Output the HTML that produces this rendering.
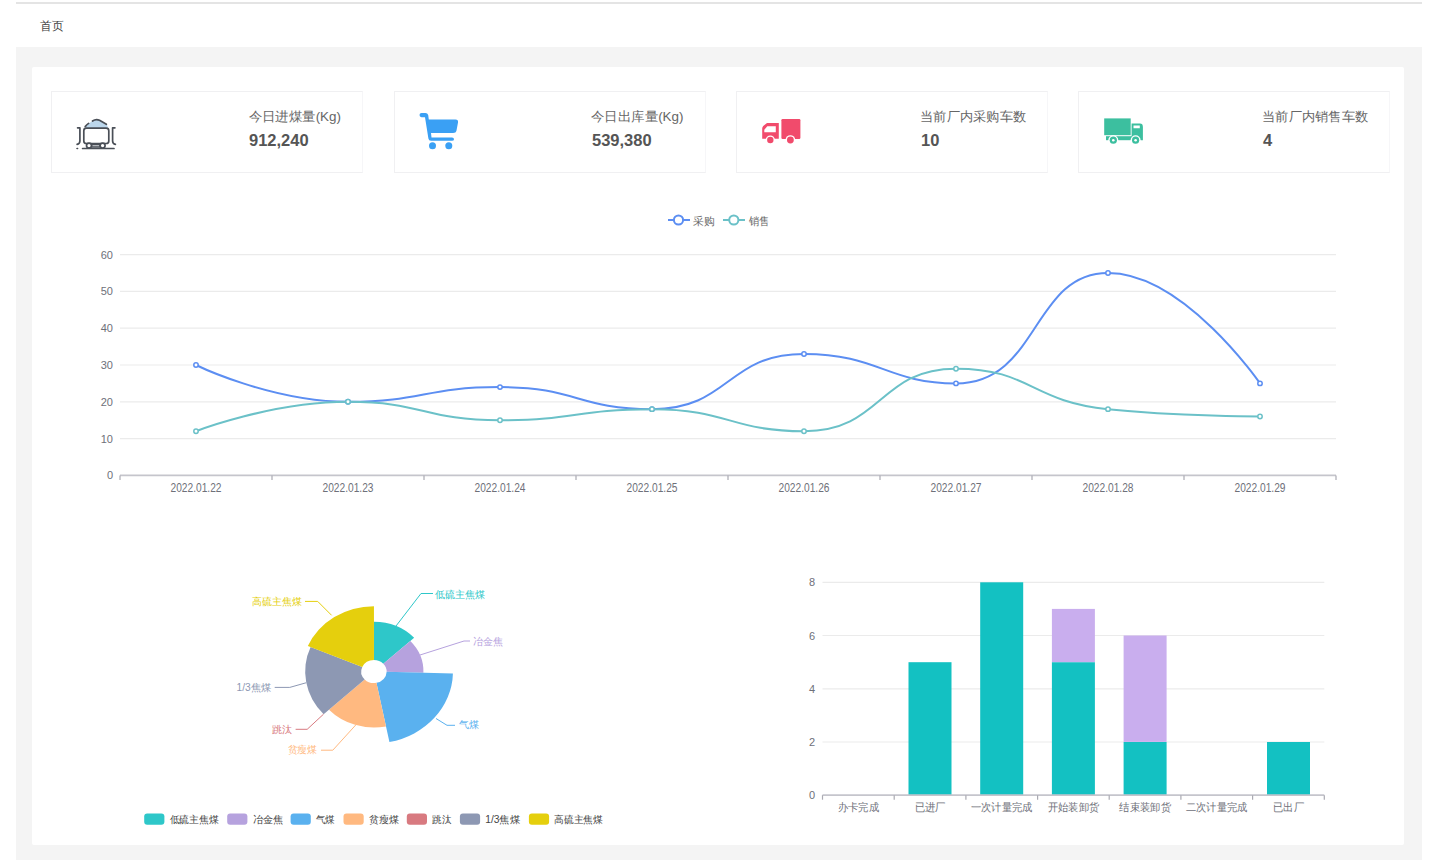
<!DOCTYPE html>
<html><head><meta charset="utf-8">
<style>
*{margin:0;padding:0;box-sizing:border-box}
html,body{width:1440px;height:860px;overflow:hidden;background:#fff;font-family:"Liberation Sans",sans-serif}
.topline{position:absolute;left:16px;top:2px;width:1406px;height:2px;background:#e4e4e4}
.crumb{position:absolute;left:40px;top:18px;font-size:12px;color:#444;line-height:15px}
.bg{position:absolute;left:16px;top:47px;width:1406px;height:813px;background:#f4f4f4}
.card{position:absolute;left:32px;top:66.5px;width:1371.5px;height:778.3px;background:#fff;border-radius:2px}
.stat{position:absolute;top:91px;width:312px;height:81.5px;border:1px solid #f0f0f2;border-right-color:#f6f6f8;background:#fff}
.stat .lbl{position:absolute;top:17px;font-size:13px;color:#666;line-height:16px;white-space:nowrap}
.stat .num{position:absolute;top:39.3px;font-size:16.5px;font-weight:bold;color:#555;line-height:18px}
svg.ch{position:absolute;left:0;top:0}
.ax{font-size:11px;fill:#6E7079}
.crumbt{font-size:12px;fill:#444}
.lblt{font-size:13px;fill:#666}
.lg{font-size:11px;fill:#666}
.pl{font-size:10px}
</style></head><body>
<div class="topline"></div>
<div class="bg"></div>
<div class="card"></div>
<div class="stat" style="left:51px"><div class="num" style="left:197px">912,240</div></div>
<div class="stat" style="left:394px"><div class="num" style="left:197px">539,380</div></div>
<div class="stat" style="left:736px"><div class="num" style="left:184px">10</div></div>
<div class="stat" style="left:1078px"><div class="num" style="left:184px">4</div></div>
<svg class="ch" width="1440" height="860" viewBox="0 0 1440 860">

<g fill="none" stroke="#4a4f57" stroke-width="1.7" stroke-linecap="round" stroke-linejoin="round">
 <path d="M84.5,128.2 Q88,123 92.5,121 Q96,118.6 99.5,120.2 L106.8,124.4 L108.3,128.2Z" fill="#bcd7ec" stroke="none"/>
 <path d="M85.2,126.6 Q86.8,124.6 88.6,123.4"/>
 <path d="M92.5,121 Q96,118.7 99.5,120.3 L106.4,124.3"/>
 <rect x="83.8" y="128.1" width="25" height="15.4" rx="2.6"/>
 <path d="M77.6,127.8 L79.9,127.8 L79.9,141 Q79.9,143.8 77.1,144.3"/>
 <path d="M114.9,127.8 L112.6,127.8 L112.6,141 Q112.6,143.8 115.4,144.3"/>
 <rect x="91.6" y="144.7" width="8.4" height="2.3" fill="#d6d8dc" stroke-width="1.3"/>
 <circle cx="89" cy="145.6" r="2.5" fill="#fff"/>
 <circle cx="102.6" cy="145.6" r="2.5" fill="#fff"/>
 <line x1="82.6" y1="148.5" x2="114" y2="148.5"/>
 <circle cx="77.2" cy="148.5" r="0.5" fill="#4a4f57" stroke-width="1"/>
</g>
<g fill="#3aa0f4">
 <path d="M421.5,113 L425.5,113 Q427.5,113 428.2,115 L428.8,119.6 L455.5,119.6 Q458.5,119.6 458,122.5 L456.5,130.5 Q456,133 453,133 L431,133 L431.5,137.5 L452,137.5 Q454,137.5 454,139.2 Q454,140.8 452,140.8 L431,140.8 Q428.7,140.8 428.4,138.5 L425,117.2 L421.5,117.2 Q419.5,117.2 419.5,115.1 Q419.5,113 421.5,113Z"/>
 <circle cx="432.5" cy="145.7" r="3.5"/>
 <circle cx="448.8" cy="145.7" r="3.5"/>
</g>
<g fill="#f14b6c">
 <rect x="781.4" y="119" width="19" height="20" rx="1.2"/>
 <path d="M767,123 L778.8,123 L778.8,138.7 L762.2,138.7 L762.2,128.5 Q762.2,127 763.2,126 Z M767.3,126.3 L764.3,129.8 L764.3,132.3 L775.8,132.3 L775.8,126.3Z" fill-rule="evenodd"/>
 <circle cx="770.3" cy="140" r="4.6" fill="#fff"/>
 <circle cx="790.4" cy="140" r="4.8" fill="#fff"/>
 <circle cx="770.3" cy="140" r="3.2"/>
 <circle cx="790.4" cy="140" r="3.4"/>
</g>
<g fill="#3cbf9f">
 <rect x="1104.2" y="118.4" width="26.5" height="16.8"/>
 <path d="M1131.6,123.6 L1140,123.6 Q1142.9,123.6 1142.9,127 L1142.9,140.2 L1131.6,140.2Z M1133.5,125.6 L1139.8,125.6 L1139.8,128.3 L1133.5,128.3Z" fill-rule="evenodd"/>
 <rect x="1106" y="136.2" width="26" height="4"/>
 <circle cx="1113.3" cy="140.2" r="5" fill="#fff"/>
 <circle cx="1135.6" cy="140.2" r="5" fill="#fff"/>
 <circle cx="1113.3" cy="140.2" r="3.6"/>
 <circle cx="1135.6" cy="140.2" r="3.6"/>
 <circle cx="1113.3" cy="140.2" r="1.3" fill="#fff"/>
 <circle cx="1135.6" cy="140.2" r="1.3" fill="#fff"/>
</g>


<text x="40" y="30" class="crumbt" textLength="23.5" lengthAdjust="spacingAndGlyphs">首页</text>
<text x="248.5" y="121.4" class="lblt" textLength="92.5" lengthAdjust="spacingAndGlyphs">今日进煤量(Kg)</text>
<text x="591" y="121.4" class="lblt" textLength="92.5" lengthAdjust="spacingAndGlyphs">今日出库量(Kg)</text>
<text x="920.2" y="121.4" class="lblt" textLength="106" lengthAdjust="spacingAndGlyphs">当前厂内采购车数</text>
<text x="1262.2" y="121.4" class="lblt" textLength="106" lengthAdjust="spacingAndGlyphs">当前厂内销售车数</text>
<line x1="120" y1="438.6" x2="1336" y2="438.6" stroke="#ebebeb" stroke-width="1.2"/>
<line x1="120" y1="401.8" x2="1336" y2="401.8" stroke="#ebebeb" stroke-width="1.2"/>
<line x1="120" y1="365.0" x2="1336" y2="365.0" stroke="#ebebeb" stroke-width="1.2"/>
<line x1="120" y1="328.2" x2="1336" y2="328.2" stroke="#ebebeb" stroke-width="1.2"/>
<line x1="120" y1="291.4" x2="1336" y2="291.4" stroke="#ebebeb" stroke-width="1.2"/>
<line x1="120" y1="254.6" x2="1336" y2="254.6" stroke="#ebebeb" stroke-width="1.2"/>
<text x="113" y="479.4" text-anchor="end" class="ax">0</text>
<text x="113" y="442.6" text-anchor="end" class="ax">10</text>
<text x="113" y="405.8" text-anchor="end" class="ax">20</text>
<text x="113" y="369.0" text-anchor="end" class="ax">30</text>
<text x="113" y="332.2" text-anchor="end" class="ax">40</text>
<text x="113" y="295.4" text-anchor="end" class="ax">50</text>
<text x="113" y="258.6" text-anchor="end" class="ax">60</text>
<line x1="120" y1="475.4" x2="1336" y2="475.4" stroke="#c5c5cc" stroke-width="1.8"/>
<line x1="120" y1="475.4" x2="120" y2="479.9" stroke="#aaaab2" stroke-width="1.2"/>
<line x1="272" y1="475.4" x2="272" y2="479.9" stroke="#aaaab2" stroke-width="1.2"/>
<line x1="424" y1="475.4" x2="424" y2="479.9" stroke="#aaaab2" stroke-width="1.2"/>
<line x1="576" y1="475.4" x2="576" y2="479.9" stroke="#aaaab2" stroke-width="1.2"/>
<line x1="728" y1="475.4" x2="728" y2="479.9" stroke="#aaaab2" stroke-width="1.2"/>
<line x1="880" y1="475.4" x2="880" y2="479.9" stroke="#aaaab2" stroke-width="1.2"/>
<line x1="1032" y1="475.4" x2="1032" y2="479.9" stroke="#aaaab2" stroke-width="1.2"/>
<line x1="1184" y1="475.4" x2="1184" y2="479.9" stroke="#aaaab2" stroke-width="1.2"/>
<line x1="1336" y1="475.4" x2="1336" y2="479.9" stroke="#aaaab2" stroke-width="1.2"/>
<text x="196" y="492.2" text-anchor="middle" class="ax" style="font-size:12px" textLength="51" lengthAdjust="spacingAndGlyphs">2022.01.22</text>
<text x="348" y="492.2" text-anchor="middle" class="ax" style="font-size:12px" textLength="51" lengthAdjust="spacingAndGlyphs">2022.01.23</text>
<text x="500" y="492.2" text-anchor="middle" class="ax" style="font-size:12px" textLength="51" lengthAdjust="spacingAndGlyphs">2022.01.24</text>
<text x="652" y="492.2" text-anchor="middle" class="ax" style="font-size:12px" textLength="51" lengthAdjust="spacingAndGlyphs">2022.01.25</text>
<text x="804" y="492.2" text-anchor="middle" class="ax" style="font-size:12px" textLength="51" lengthAdjust="spacingAndGlyphs">2022.01.26</text>
<text x="956" y="492.2" text-anchor="middle" class="ax" style="font-size:12px" textLength="51" lengthAdjust="spacingAndGlyphs">2022.01.27</text>
<text x="1108" y="492.2" text-anchor="middle" class="ax" style="font-size:12px" textLength="51" lengthAdjust="spacingAndGlyphs">2022.01.28</text>
<text x="1260" y="492.2" text-anchor="middle" class="ax" style="font-size:12px" textLength="51" lengthAdjust="spacingAndGlyphs">2022.01.29</text>
<path d="M196.00,365.00 C196.00,365.00 271.10,401.80 348.00,401.80 C423.10,401.80 424.22,387.08 500.00,387.08 C576.22,387.08 577.96,409.16 652.00,409.16 C729.96,409.16 726.35,353.96 804.00,353.96 C878.35,353.96 887.33,383.40 956.00,383.40 C1039.33,383.40 1032.00,273.00 1108.00,273.00 C1184.00,273.00 1260.00,383.40 1260.00,383.40" fill="none" stroke="#5C8EF2" stroke-width="2"/>
<path d="M196.00,431.24 C196.00,431.24 271.58,401.80 348.00,401.80 C423.58,401.80 423.82,420.20 500.00,420.20 C575.82,420.20 576.30,409.16 652.00,409.16 C728.30,409.16 730.58,431.24 804.00,431.24 C882.58,431.24 878.33,368.68 956.00,368.68 C1030.33,368.68 1030.74,401.55 1108.00,409.16 C1182.74,416.52 1260.00,416.52 1260.00,416.52" fill="none" stroke="#6BC1C8" stroke-width="2"/>
<circle cx="196.0" cy="365.00" r="2.2" fill="#fff" stroke="#5C8EF2" stroke-width="1.5"/>
<circle cx="348.0" cy="401.80" r="2.2" fill="#fff" stroke="#5C8EF2" stroke-width="1.5"/>
<circle cx="500.0" cy="387.08" r="2.2" fill="#fff" stroke="#5C8EF2" stroke-width="1.5"/>
<circle cx="652.0" cy="409.16" r="2.2" fill="#fff" stroke="#5C8EF2" stroke-width="1.5"/>
<circle cx="804.0" cy="353.96" r="2.2" fill="#fff" stroke="#5C8EF2" stroke-width="1.5"/>
<circle cx="956.0" cy="383.40" r="2.2" fill="#fff" stroke="#5C8EF2" stroke-width="1.5"/>
<circle cx="1108.0" cy="273.00" r="2.2" fill="#fff" stroke="#5C8EF2" stroke-width="1.5"/>
<circle cx="1260.0" cy="383.40" r="2.2" fill="#fff" stroke="#5C8EF2" stroke-width="1.5"/>
<circle cx="196.0" cy="431.24" r="2.2" fill="#fff" stroke="#6BC1C8" stroke-width="1.5"/>
<circle cx="348.0" cy="401.80" r="2.2" fill="#fff" stroke="#6BC1C8" stroke-width="1.5"/>
<circle cx="500.0" cy="420.20" r="2.2" fill="#fff" stroke="#6BC1C8" stroke-width="1.5"/>
<circle cx="652.0" cy="409.16" r="2.2" fill="#fff" stroke="#6BC1C8" stroke-width="1.5"/>
<circle cx="804.0" cy="431.24" r="2.2" fill="#fff" stroke="#6BC1C8" stroke-width="1.5"/>
<circle cx="956.0" cy="368.68" r="2.2" fill="#fff" stroke="#6BC1C8" stroke-width="1.5"/>
<circle cx="1108.0" cy="409.16" r="2.2" fill="#fff" stroke="#6BC1C8" stroke-width="1.5"/>
<circle cx="1260.0" cy="416.52" r="2.2" fill="#fff" stroke="#6BC1C8" stroke-width="1.5"/>
<line x1="668" y1="220" x2="690" y2="220" stroke="#5C8EF2" stroke-width="2"/><circle cx="678.5" cy="220" r="4.6" fill="#fff" stroke="#5C8EF2" stroke-width="2"/>
<text x="693" y="224.5" class="lg" textLength="21.5" lengthAdjust="spacingAndGlyphs">采购</text>
<line x1="723" y1="220" x2="745" y2="220" stroke="#6BC1C8" stroke-width="2"/><circle cx="733.8" cy="220" r="4.6" fill="#fff" stroke="#6BC1C8" stroke-width="2"/>
<text x="748.5" y="224.5" class="lg" textLength="20.5" lengthAdjust="spacingAndGlyphs">销售</text>
<path fill="#2ec7c9" d="M373.95,621.72 A54.7,49.78 0 0 1 414.15,637.74 L383.28,663.66 A12.7,11.56 0 0 0 373.95,659.94Z"/>
<path fill="#b6a2de" d="M410.33,640.95 A49.5,45.05 0 0 1 423.43,672.68 L386.65,671.80 A12.7,11.56 0 0 0 383.28,663.66Z"/>
<path fill="#5ab1ef" d="M452.92,673.38 A79,71.89 0 0 1 389.43,742.00 L376.44,682.83 A12.7,11.56 0 0 0 386.65,671.80Z"/>
<path fill="#ffb980" d="M386.00,726.38 A61.5,55.97 0 0 1 328.97,709.67 L364.66,679.38 A12.7,11.56 0 0 0 376.44,682.83Z"/>
<path fill="#8d98b3" d="M323.63,714.20 A68.8,62.61 0 0 1 310.62,647.04 L362.26,666.98 A12.7,11.56 0 0 0 364.66,679.38Z"/>
<path fill="#e5cf0d" d="M307.86,645.97 A71.8,65.34 0 0 1 373.95,606.16 L373.95,659.94 A12.7,11.56 0 0 0 362.26,666.98Z"/>
<polyline points="396,626 421,593.5 433,593.5" fill="none" stroke="#2ec7c9" stroke-width="1"/>
<polyline points="420,655 464,641 470,641" fill="none" stroke="#b6a2de" stroke-width="1"/>
<polyline points="436,718.5 447,725.3 455,725.3" fill="none" stroke="#5ab1ef" stroke-width="1"/>
<polyline points="356,724.7 332.8,750.2 321,750.2" fill="none" stroke="#ffb980" stroke-width="1"/>
<polyline points="323.5,714.2 307.2,729.3 295.6,729.3" fill="none" stroke="#d87a80" stroke-width="1"/>
<polyline points="306,682.8 289.8,687.4 274.7,687.4" fill="none" stroke="#8d98b3" stroke-width="1"/>
<polyline points="331.6,615.3 317.7,601.4 305,601.4" fill="none" stroke="#e5cf0d" stroke-width="1"/>
<text x="435.3" y="598" fill="#2ec7c9" text-anchor="start" class="pl" textLength="50" lengthAdjust="spacingAndGlyphs">低硫主焦煤</text>
<text x="472.6" y="645" fill="#b6a2de" text-anchor="start" class="pl" textLength="30" lengthAdjust="spacingAndGlyphs">冶金焦</text>
<text x="459.4" y="728.3" fill="#5ab1ef" text-anchor="start" class="pl" textLength="20" lengthAdjust="spacingAndGlyphs">气煤</text>
<text x="317.1" y="753.2" fill="#ffb980" text-anchor="end" class="pl" textLength="29.5" lengthAdjust="spacingAndGlyphs">贫瘦煤</text>
<text x="292" y="732.8" fill="#d87a80" text-anchor="end" class="pl" textLength="20" lengthAdjust="spacingAndGlyphs">跳汰</text>
<text x="271" y="691" fill="#8d98b3" text-anchor="end" class="pl" textLength="34.5" lengthAdjust="spacingAndGlyphs">1/3焦煤</text>
<text x="301.8" y="605.1" fill="#e5cf0d" text-anchor="end" class="pl" textLength="49.5" lengthAdjust="spacingAndGlyphs">高硫主焦煤</text>
<rect x="144.2" y="813.5" width="20.2" height="11.2" rx="3" fill="#2ec7c9"/>
<text x="169.5" y="822.7" class="pl" fill="#444" textLength="49" lengthAdjust="spacingAndGlyphs">低硫主焦煤</text>
<rect x="227.2" y="813.5" width="20.2" height="11.2" rx="3" fill="#b6a2de"/>
<text x="252.5" y="822.7" class="pl" fill="#444" textLength="30.4" lengthAdjust="spacingAndGlyphs">冶金焦</text>
<rect x="290.6" y="813.5" width="20.2" height="11.2" rx="3" fill="#5ab1ef"/>
<text x="315.90000000000003" y="822.7" class="pl" fill="#444" textLength="19" lengthAdjust="spacingAndGlyphs">气煤</text>
<rect x="343.5" y="813.5" width="20.2" height="11.2" rx="3" fill="#ffb980"/>
<text x="368.8" y="822.7" class="pl" fill="#444" textLength="30" lengthAdjust="spacingAndGlyphs">贫瘦煤</text>
<rect x="406.8" y="813.5" width="20.2" height="11.2" rx="3" fill="#d87a80"/>
<text x="432.1" y="822.7" class="pl" fill="#444" textLength="19" lengthAdjust="spacingAndGlyphs">跳汰</text>
<rect x="459.9" y="813.5" width="20.2" height="11.2" rx="3" fill="#8d98b3"/>
<text x="485.2" y="822.7" class="pl" fill="#444" textLength="34.7" lengthAdjust="spacingAndGlyphs">1/3焦煤</text>
<rect x="528.9" y="813.5" width="20.2" height="11.2" rx="3" fill="#e5cf0d"/>
<text x="554.1999999999999" y="822.7" class="pl" fill="#444" textLength="48.6" lengthAdjust="spacingAndGlyphs">高硫主焦煤</text>
<line x1="822.5" y1="742.0" x2="1324.3" y2="742.0" stroke="#ebebeb" stroke-width="1.2"/>
<line x1="822.5" y1="688.8" x2="1324.3" y2="688.8" stroke="#ebebeb" stroke-width="1.2"/>
<line x1="822.5" y1="635.5" x2="1324.3" y2="635.5" stroke="#ebebeb" stroke-width="1.2"/>
<line x1="822.5" y1="582.3" x2="1324.3" y2="582.3" stroke="#ebebeb" stroke-width="1.2"/>
<text x="815" y="799.2" text-anchor="end" class="ax">0</text>
<text x="815" y="746.0" text-anchor="end" class="ax">2</text>
<text x="815" y="692.8" text-anchor="end" class="ax">4</text>
<text x="815" y="639.5" text-anchor="end" class="ax">6</text>
<text x="815" y="586.3" text-anchor="end" class="ax">8</text>
<text x="858.3" y="811.3" text-anchor="middle" class="ax" textLength="41.2" lengthAdjust="spacingAndGlyphs">办卡完成</text>
<rect x="908.5" y="662.2" width="43" height="133.1" fill="#13C1C2"/>
<text x="930.0" y="811.3" text-anchor="middle" class="ax" textLength="30.9" lengthAdjust="spacingAndGlyphs">已进厂</text>
<rect x="980.2" y="582.3" width="43" height="212.9" fill="#13C1C2"/>
<text x="1001.7" y="811.3" text-anchor="middle" class="ax" textLength="61.8" lengthAdjust="spacingAndGlyphs">一次计量完成</text>
<rect x="1051.9" y="662.2" width="43" height="133.1" fill="#13C1C2"/>
<rect x="1051.9" y="608.9" width="43" height="53.2" fill="#C9AEEE"/>
<text x="1073.4" y="811.3" text-anchor="middle" class="ax" textLength="51.5" lengthAdjust="spacingAndGlyphs">开始装卸货</text>
<rect x="1123.6" y="742.0" width="43" height="53.2" fill="#13C1C2"/>
<rect x="1123.6" y="635.5" width="43" height="106.4" fill="#C9AEEE"/>
<text x="1145.1" y="811.3" text-anchor="middle" class="ax" textLength="51.5" lengthAdjust="spacingAndGlyphs">结束装卸货</text>
<text x="1216.8" y="811.3" text-anchor="middle" class="ax" textLength="61.8" lengthAdjust="spacingAndGlyphs">二次计量完成</text>
<rect x="1267.0" y="742.0" width="43" height="53.2" fill="#13C1C2"/>
<text x="1288.5" y="811.3" text-anchor="middle" class="ax" textLength="30.9" lengthAdjust="spacingAndGlyphs">已出厂</text>
<line x1="822.5" y1="795.2" x2="1324.3" y2="795.2" stroke="#c5c5cc" stroke-width="1.8"/>
<line x1="822.5" y1="795.2" x2="822.5" y2="799.7" stroke="#aaaab2" stroke-width="1.2"/>
<line x1="894.2" y1="795.2" x2="894.2" y2="799.7" stroke="#aaaab2" stroke-width="1.2"/>
<line x1="965.9" y1="795.2" x2="965.9" y2="799.7" stroke="#aaaab2" stroke-width="1.2"/>
<line x1="1037.6" y1="795.2" x2="1037.6" y2="799.7" stroke="#aaaab2" stroke-width="1.2"/>
<line x1="1109.2" y1="795.2" x2="1109.2" y2="799.7" stroke="#aaaab2" stroke-width="1.2"/>
<line x1="1180.9" y1="795.2" x2="1180.9" y2="799.7" stroke="#aaaab2" stroke-width="1.2"/>
<line x1="1252.6" y1="795.2" x2="1252.6" y2="799.7" stroke="#aaaab2" stroke-width="1.2"/>
<line x1="1324.3" y1="795.2" x2="1324.3" y2="799.7" stroke="#aaaab2" stroke-width="1.2"/>
</svg>
</body></html>
